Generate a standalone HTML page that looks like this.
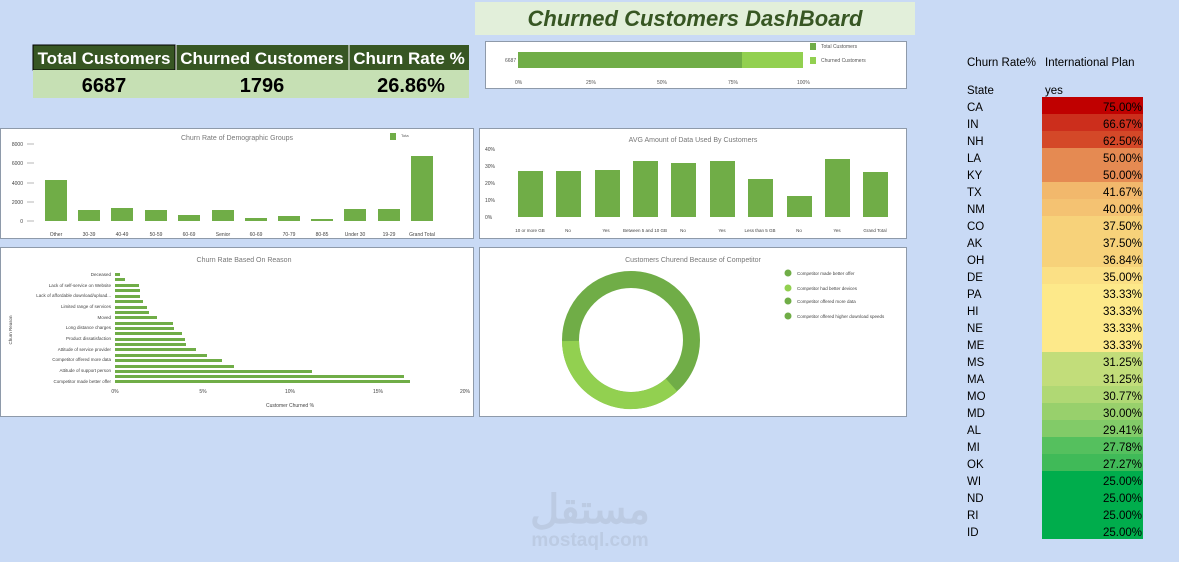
<!DOCTYPE html>
<html><head><meta charset="utf-8"><style>
html,body{margin:0;padding:0;background:#c9daf5;width:1179px;height:562px;overflow:hidden}
svg{display:block}
text{font-family:"Liberation Sans",sans-serif}
</style></head><body>
<svg width="1179" height="562" viewBox="0 0 1179 562" xmlns="http://www.w3.org/2000/svg">
<rect width="1179" height="562" fill="#c9daf5"/>
<!-- title -->
<rect x="475" y="2" width="440" height="33" fill="#e2efda"/>
<text x="695" y="26" text-anchor="middle" font-size="22" font-weight="bold" font-style="italic" fill="#375623">Churned Customers DashBoard</text>
<!-- KPI -->
<rect x="33" y="45" width="436" height="25" fill="#375623"/>
<rect x="33" y="45" width="142" height="25" fill="none" stroke="#000" stroke-width="1"/>
<line x1="176" y1="45" x2="176" y2="70" stroke="#fff"/>
<line x1="349" y1="45" x2="349" y2="70" stroke="#fff"/>
<rect x="33" y="70" width="436" height="28" fill="#c6e0b4"/>
<g font-weight="bold" fill="#fff" font-size="17" text-anchor="middle">
<text x="104" y="64">Total Customers</text><text x="262" y="64">Churned Customers</text><text x="409" y="64">Churn Rate %</text></g>
<g font-weight="bold" fill="#000" font-size="20" text-anchor="middle">
<text x="104" y="92">6687</text><text x="262" y="92">1796</text><text x="411" y="92">26.86%</text></g>
<!-- top bar panel -->
<rect x="485.5" y="41.5" width="421" height="47" fill="#fff" stroke="#8e9aaa"/>
<rect x="518" y="52" width="224" height="16" fill="#70ad47"/><rect x="742" y="52" width="61" height="16" fill="#92d050"/>
<g font-size="5" fill="#555"><text x="505" y="62">6687</text>
<text x="515" y="84">0%</text><text x="586" y="84">25%</text><text x="657" y="84">50%</text><text x="728" y="84">75%</text><text x="797" y="84">100%</text>
<rect x="810" y="43" width="6" height="7" fill="#70ad47"/><text x="821" y="48">Total Customers</text>
<rect x="810" y="57" width="6" height="7" fill="#92d050"/><text x="821" y="62">Churned Customers</text></g>
<!-- panel 1 -->
<rect x="0.5" y="128.5" width="473" height="110" fill="#fff" stroke="#8e9aaa"/>
<text x="237" y="140" font-size="7" fill="#777" text-anchor="middle">Churn Rate of Demographic Groups</text>
<rect x="390" y="133" width="6" height="7" fill="#70ad47"/><text x="401" y="137" font-size="4" fill="#555">Tota</text>
<g font-size="5" fill="#444" text-anchor="end"><text x="23" y="146">8000</text><text x="23" y="165">6000</text><text x="23" y="185">4000</text><text x="23" y="204">2000</text><text x="23" y="223">0</text></g>
<g stroke="#999" stroke-width="0.7"><line x1="27" y1="144" x2="34" y2="144"/><line x1="27" y1="163" x2="34" y2="163"/><line x1="27" y1="183" x2="34" y2="183"/><line x1="27" y1="202" x2="34" y2="202"/><line x1="27" y1="221" x2="34" y2="221"/></g>
<g fill="#70ad47">
<rect x="45" y="180" width="22" height="41"/><rect x="78" y="210" width="22" height="11"/><rect x="111" y="208" width="22" height="13"/><rect x="145" y="210" width="22" height="11"/><rect x="178" y="215" width="22" height="6"/><rect x="212" y="210" width="22" height="11"/><rect x="245" y="218" width="22" height="3"/><rect x="278" y="216" width="22" height="5"/><rect x="311" y="219" width="22" height="2"/><rect x="344" y="209" width="22" height="12"/><rect x="378" y="209" width="22" height="12"/><rect x="411" y="156" width="22" height="65"/></g>
<g font-size="5" fill="#444" text-anchor="middle"><text x="56" y="236">Other</text><text x="89" y="236">30-39</text><text x="122" y="236">40-49</text><text x="156" y="236">50-59</text><text x="189" y="236">60-69</text><text x="223" y="236">Senior</text><text x="256" y="236">60-69</text><text x="289" y="236">70-79</text><text x="322" y="236">80-85</text><text x="355" y="236">Under 30</text><text x="389" y="236">19-29</text><text x="422" y="236">Grand Total</text></g>
<!-- panel 2 -->
<rect x="479.5" y="128.5" width="427" height="110" fill="#fff" stroke="#8e9aaa"/>
<text x="693" y="142" font-size="7" fill="#777" text-anchor="middle">AVG Amount of Data Used By Customers</text>
<g font-size="5" fill="#444"><text x="485" y="151">40%</text><text x="485" y="168">30%</text><text x="485" y="185">20%</text><text x="485" y="202">10%</text><text x="485" y="219">0%</text></g>
<g fill="#70ad47">
<rect x="518" y="171" width="25" height="46"/><rect x="556" y="171" width="25" height="46"/><rect x="595" y="170" width="25" height="47"/><rect x="633" y="161" width="25" height="56"/><rect x="671" y="163" width="25" height="54"/><rect x="710" y="161" width="25" height="56"/><rect x="748" y="179" width="25" height="38"/><rect x="787" y="196" width="25" height="21"/><rect x="825" y="159" width="25" height="58"/><rect x="863" y="172" width="25" height="45"/></g>
<g font-size="4.5" fill="#444" text-anchor="middle"><text x="530" y="232">10 or more GB</text><text x="568" y="232">No</text><text x="606" y="232">Yes</text><text x="645" y="232">Between 5 and 10 GB</text><text x="683" y="232">No</text><text x="722" y="232">Yes</text><text x="760" y="232">Less than 5 GB</text><text x="799" y="232">No</text><text x="837" y="232">Yes</text><text x="875" y="232">Grand Total</text></g>
<!-- panel 3 -->
<rect x="0.5" y="247.5" width="473" height="169" fill="#fff" stroke="#8e9aaa"/>
<text x="244" y="262" font-size="7" fill="#777" text-anchor="middle">Churn Rate Based On Reason</text>
<g fill="#70ad47">
<rect x="115" y="273" width="5" height="3"/><rect x="115" y="278" width="10" height="3"/><rect x="115" y="284" width="24" height="3"/><rect x="115" y="289" width="25" height="3"/><rect x="115" y="295" width="25" height="3"/><rect x="115" y="300" width="28" height="3"/><rect x="115" y="306" width="32" height="3"/><rect x="115" y="311" width="34" height="3"/><rect x="115" y="316" width="42" height="3"/><rect x="115" y="322" width="58" height="3"/><rect x="115" y="327" width="59" height="3"/><rect x="115" y="332" width="67" height="3"/><rect x="115" y="338" width="70" height="3"/><rect x="115" y="343" width="71" height="3"/><rect x="115" y="348" width="81" height="3"/><rect x="115" y="354" width="92" height="3"/><rect x="115" y="359" width="107" height="3"/><rect x="115" y="365" width="119" height="3"/><rect x="115" y="370" width="197" height="3"/><rect x="115" y="375" width="289" height="3"/><rect x="115" y="380" width="295" height="3"/></g>
<g font-size="4.5" fill="#444" text-anchor="end"><text x="111" y="276">Deceased</text><text x="111" y="287">Lack of self-service on Website</text><text x="111" y="297">Lack of affordable download/upload...</text><text x="111" y="308">Limited range of services</text><text x="111" y="319">Moved</text><text x="111" y="329">Long distance charges</text><text x="111" y="340">Product dissatisfaction</text><text x="111" y="351">Attitude of service provider</text><text x="111" y="361">Competitor offered more data</text><text x="111" y="372">Attitude of support person</text><text x="111" y="383">Competitor made better offer</text></g>
<g font-size="5" fill="#444" text-anchor="middle"><text x="115" y="393">0%</text><text x="203" y="393">5%</text><text x="290" y="393">10%</text><text x="378" y="393">15%</text><text x="465" y="393">20%</text><text x="290" y="407">Customer Churned %</text></g>
<text x="12" y="330" font-size="4.5" fill="#444" text-anchor="middle" transform="rotate(-90 12 330)">Churn Reason</text>
<!-- panel 4 -->
<rect x="479.5" y="247.5" width="427" height="169" fill="#fff" stroke="#8e9aaa"/>
<text x="693" y="262" font-size="7" fill="#777" text-anchor="middle">Customers Churend Because of Competitor</text>
<circle cx="631" cy="340" r="60.5" fill="none" stroke="#70ad47" stroke-width="17"/>
<path d="M 671.5 385 A 60.5 60.5 0 0 1 570.5 341" fill="none" stroke="#92d050" stroke-width="17"/>
<g font-size="4.5" fill="#444">
<circle cx="788" cy="273" r="3.5" fill="#70ad47"/><text x="797" y="275">Competitor made better offer</text>
<circle cx="788" cy="288" r="3.5" fill="#92d050"/><text x="797" y="290">Competitor had better devices</text>
<circle cx="788" cy="301" r="3.5" fill="#70ad47"/><text x="797" y="303">Competitor offered more data</text>
<circle cx="788" cy="316" r="3.5" fill="#70ad47"/><text x="797" y="318">Competitor offered higher download speeds</text></g>
<!-- watermark -->
<text x="590" y="523" font-size="40" font-weight="bold" fill="#bccbe3" text-anchor="middle" font-family="'Noto Sans CJK SC',sans-serif">مستقل</text>
<text x="590" y="546" font-size="19" font-weight="bold" fill="#bccbe3" text-anchor="middle">mostaql.com</text>
<!-- right table -->
<g font-size="11.5" fill="#000" font-family="'DejaVu Sans',sans-serif">
<text x="967" y="66" font-family="'DejaVu Sans',sans-serif">Churn Rate%</text><text x="1045" y="66">International Plan</text>
<text x="967" y="94">State</text><text x="1045" y="94">yes</text></g>
<g id="rows" font-size="11.5" font-family="'DejaVu Sans',sans-serif">
<rect x="1042" y="97" width="101" height="17" fill="#c00000"/>
<rect x="1042" y="114" width="101" height="17" fill="#cc2e1c"/>
<rect x="1042" y="131" width="101" height="17" fill="#d44828"/>
<rect x="1042" y="148" width="101" height="34" fill="#e58a52"/>
<rect x="1042" y="182" width="101" height="17" fill="#f2b86c"/>
<rect x="1042" y="199" width="101" height="17" fill="#f4c272"/>
<rect x="1042" y="216" width="101" height="51" fill="#f7d27a"/>
<rect x="1042" y="267" width="101" height="17" fill="#fbe085"/>
<rect x="1042" y="284" width="101" height="68" fill="#fde98a"/>
<rect x="1042" y="352" width="101" height="34" fill="#c2dd7a"/>
<rect x="1042" y="386" width="101" height="17" fill="#b0d874"/>
<rect x="1042" y="403" width="101" height="17" fill="#98d06c"/>
<rect x="1042" y="420" width="101" height="17" fill="#82cb68"/>
<rect x="1042" y="437" width="101" height="17" fill="#55c05e"/>
<rect x="1042" y="454" width="101" height="17" fill="#40ba58"/>
<rect x="1042" y="471" width="101" height="68" fill="#00ad4c"/>
<g fill="#000">
<text x="967" y="111">CA</text><text x="967" y="128">IN</text><text x="967" y="145">NH</text><text x="967" y="162">LA</text><text x="967" y="179">KY</text><text x="967" y="196">TX</text><text x="967" y="213">NM</text><text x="967" y="230">CO</text><text x="967" y="247">AK</text><text x="967" y="264">OH</text><text x="967" y="281">DE</text><text x="967" y="298">PA</text><text x="967" y="315">HI</text><text x="967" y="332">NE</text><text x="967" y="349">ME</text><text x="967" y="366">MS</text><text x="967" y="383">MA</text><text x="967" y="400">MO</text><text x="967" y="417">MD</text><text x="967" y="434">AL</text><text x="967" y="451">MI</text><text x="967" y="468">OK</text><text x="967" y="485">WI</text><text x="967" y="502">ND</text><text x="967" y="519">RI</text><text x="967" y="536">ID</text>
</g>
<g fill="#000" text-anchor="end">
<text x="1142" y="111">75.00%</text><text x="1142" y="128">66.67%</text><text x="1142" y="145">62.50%</text><text x="1142" y="162">50.00%</text><text x="1142" y="179">50.00%</text><text x="1142" y="196">41.67%</text><text x="1142" y="213">40.00%</text><text x="1142" y="230">37.50%</text><text x="1142" y="247">37.50%</text><text x="1142" y="264">36.84%</text><text x="1142" y="281">35.00%</text><text x="1142" y="298">33.33%</text><text x="1142" y="315">33.33%</text><text x="1142" y="332">33.33%</text><text x="1142" y="349">33.33%</text><text x="1142" y="366">31.25%</text><text x="1142" y="383">31.25%</text><text x="1142" y="400">30.77%</text><text x="1142" y="417">30.00%</text><text x="1142" y="434">29.41%</text><text x="1142" y="451">27.78%</text><text x="1142" y="468">27.27%</text><text x="1142" y="485">25.00%</text><text x="1142" y="502">25.00%</text><text x="1142" y="519">25.00%</text><text x="1142" y="536">25.00%</text>
</g></g>
</svg>
</body></html>
